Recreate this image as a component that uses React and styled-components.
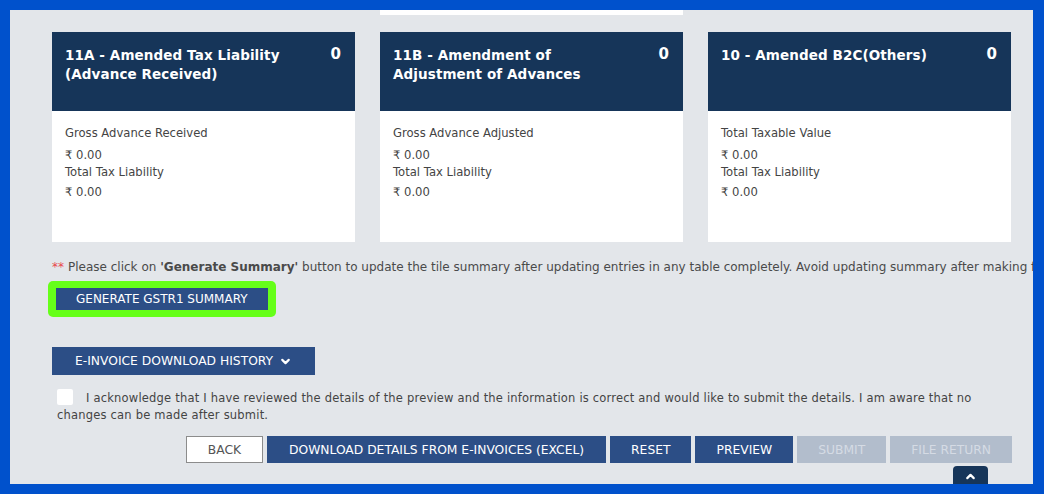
import React from "react";
import styled, { createGlobalStyle } from "styled-components";
import { ChevronDown, ChevronUp } from "lucide-react";

const GlobalStyle = createGlobalStyle`
  html, body {
    margin: 0;
    padding: 0;
    background: #0051cc;
  }
  * {
    box-sizing: border-box;
  }
`;

const Frame = styled.div`
  width: 1044px;
  height: 494px;
  padding: 10px 11px 10px 10px;
  background: #0051cc;
  font-family: "DejaVu Sans", Verdana, sans-serif;
`;

const Panel = styled.div`
  position: relative;
  height: 100%;
  overflow: hidden;
  background: #e3e6ea;
  padding: 0 21px 0 42px;
  color: #333;
`;

const TileGrid = styled.div`
  display: grid;
  grid-template-columns: repeat(3, 303px);
  column-gap: 25px;
  width: 960px;
`;

/* bottom edge of the tile row above, scrolled out of view */
const PrevTileEdge = styled.div`
  grid-column: 2;
  height: 5px;
  background: #fff;
`;

const Tiles = styled(TileGrid)`
  margin-top: 17px;
`;

const Tile = styled.div`
  display: flex;
  flex-direction: column;
  height: 210px;
  background: #fff;
`;

const TileHead = styled.div`
  display: flex;
  justify-content: space-between;
  align-items: flex-start;
  height: 79px;
  padding: 13px 14px 0 13px;
  background: #163559;
  color: #fff;
  font-weight: bold;
`;

const TileTitle = styled.div`
  max-width: 232px;
  font-size: 13.5px;
  line-height: 19px;
  letter-spacing: 0.1px;
  margin-top: 1px;
`;

const TileCount = styled.div`
  font-size: 15px;
  line-height: 19px;
`;

const TileBody = styled.div`
  padding: 14px 13px;
  font-size: 11.6px;
  color: #444;
`;

const Label = styled.div`
  line-height: 17px;
  margin-bottom: ${(p) => p.$gap || 0}px;
`;

const Amount = styled.div`
  line-height: 17px;
`;

const Notice = styled.div`
  margin-top: 18px;
  white-space: nowrap;
  font-size: 12px;
  line-height: 14px;
  color: #4a4a4a;
`;

const Stars = styled.span`
  color: #e8474c;
  margin-right: 4px;
`;

const Highlight = styled.div`
  display: inline-block;
  margin: 7px 0 0 -4px;
  padding: 7px 8px;
  border-radius: 5px;
  background: #66ff19;
`;

const Button = styled.button`
  display: inline-flex;
  align-items: center;
  justify-content: center;
  gap: 6px;
  height: ${(p) => p.$h || 27}px;
  padding: 0 ${(p) => p.$px || 20}px;
  border: 1px solid ${(p) => (p.$variant === "light" ? "#8c8c8c" : "transparent")};
  border-radius: 0;
  background: ${(p) =>
    p.$variant === "light" ? "#fff" : p.$variant === "disabled" ? "#b2bdcc" : "#2c4e86"};
  color: ${(p) =>
    p.$variant === "light" ? "#555" : p.$variant === "disabled" ? "#d5dbe4" : "#fff"};
  font-family: inherit;
  font-size: ${(p) => p.$fs || 12.3}px;
  text-transform: uppercase;
  white-space: nowrap;
  cursor: ${(p) => (p.$variant === "disabled" ? "not-allowed" : "pointer")};
`;

const HistoryRow = styled.div`
  margin-top: 30px;
`;

const Ack = styled.p`
  margin: 14px 0 0;
  padding-left: 5px;
  font-size: 11.5px;
  line-height: 17px;
  letter-spacing: 0.2px;
  color: #444;
`;

const Check = styled.span`
  display: inline-block;
  width: 16px;
  height: 16px;
  margin-right: 13px;
  vertical-align: -3px;
  background: #fff;
  border-radius: 2px;
`;

const Actions = styled.div`
  display: flex;
  justify-content: flex-end;
  gap: 4px;
  margin-top: 12px;
`;

const ScrollTop = styled.button`
  position: absolute;
  right: 45px;
  bottom: -4px;
  width: 35px;
  height: 22px;
  display: flex;
  align-items: flex-start;
  justify-content: center;
  padding-top: 4px;
  border: none;
  border-radius: 4px 4px 0 0;
  background: #163559;
  color: #fff;
`;

const tiles = [
  {
    title: "11A - Amended Tax Liability (Advance Received)",
    rows: [
      ["Gross Advance Received", "₹ 0.00"],
      ["Total Tax Liability", "₹ 0.00"],
    ],
  },
  {
    title: "11B - Amendment of Adjustment of Advances",
    rows: [
      ["Gross Advance Adjusted", "₹ 0.00"],
      ["Total Tax Liability", "₹ 0.00"],
    ],
  },
  {
    title: "10 - Amended B2C(Others)",
    rows: [
      ["Total Taxable Value", "₹ 0.00"],
      ["Total Tax Liability", "₹ 0.00"],
    ],
  },
];

const App = () => {
  return (
    <>
      <GlobalStyle />
      <Frame>
        <Panel>
          <TileGrid>
            <PrevTileEdge />
          </TileGrid>

          <Tiles>
            {tiles.map((t) => (
              <Tile key={t.title}>
                <TileHead>
                  <TileTitle>{t.title}</TileTitle>
                  <TileCount>0</TileCount>
                </TileHead>
                <TileBody>
                  {t.rows.map(([label, value], i) => (
                    <React.Fragment key={label}>
                      <Label $gap={i === 0 ? 5 : 3}>{label}</Label>
                      <Amount>{value}</Amount>
                    </React.Fragment>
                  ))}
                </TileBody>
              </Tile>
            ))}
          </Tiles>

          <Notice>
            <Stars>**</Stars>
            Please click on <b>'Generate Summary'</b> button to update the tile summary after
            updating entries in any table completely. Avoid updating summary after making few
            entries in a table.
          </Notice>

          <Highlight>
            <Button $h={22} $px={19} $fs={12}>
              Generate GSTR1 Summary
            </Button>
          </Highlight>

          <HistoryRow>
            <Button $h={28} $px={22}>
              E-Invoice Download History
              <ChevronDown size={13} strokeWidth={4} />
            </Button>
          </HistoryRow>

          <Ack>
            <Check />
            I acknowledge that I have reviewed the details of the preview and the information is
            correct and would like to submit the details. I am aware that no changes can be made
            after submit.
          </Ack>

          <Actions>
            <Button $variant="light" style={{ width: 77 }}>
              Back
            </Button>
            <Button $px={21}>Download Details from E-Invoices (Excel)</Button>
            <Button>Reset</Button>
            <Button>Preview</Button>
            <Button $variant="disabled">Submit</Button>
            <Button $variant="disabled">File Return</Button>
          </Actions>

          <ScrollTop aria-label="Back to top">
            <ChevronUp size={13} strokeWidth={4} />
          </ScrollTop>
        </Panel>
      </Frame>
    </>
  );
};

export default App;
